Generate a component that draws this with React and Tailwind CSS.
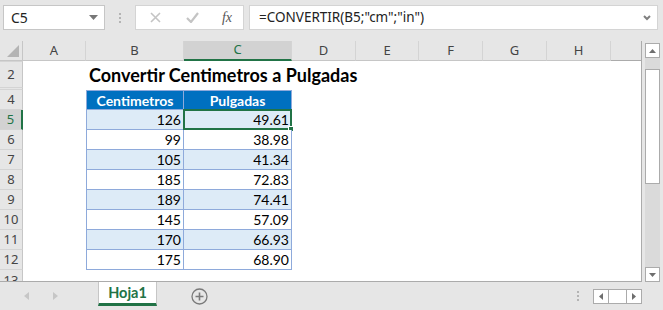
import React from 'react';

const cols = [
  { l: 'A', w: 'w-[63px]' },
  { l: 'B', w: 'w-[98px]' },
  { l: 'C', w: 'w-[108px]', sel: true },
  { l: 'D', w: 'w-[64px]' },
  { l: 'E', w: 'w-[63px]' },
  { l: 'F', w: 'w-[64px]' },
  { l: 'G', w: 'w-[64px]' },
  { l: 'H', w: 'w-[64px]' },
];

const data = [
  [126, '49.61'],
  [99, '38.98'],
  [105, '41.34'],
  [185, '72.83'],
  [189, '74.41'],
  [145, '57.09'],
  [170, '66.93'],
  [175, '68.90'],
];

const ui = { fontFamily: '"Noto Sans", "Open Sans", sans-serif' };
const cal = { fontFamily: 'Lato, "Noto Sans", sans-serif' };

function RowHead({ n, sel, className = '' }) {
  return (
    <div
      className={
        'w-[23px] shrink-0 flex items-center justify-center text-[13px] border-b border-[#d4d4d4] ' +
        (sel
          ? 'bg-[#d2d2d2] text-[#217346] border-r-2 border-r-[#217346]'
          : 'bg-[#e6e6e6] text-[#444444] border-r border-r-[#c6c6c6]') +
        ' ' +
        className
      }
      style={ui}
    >
      {n}
    </div>
  );
}

export default function App() {
  return (
    <div className="w-[663px] h-[310px] bg-[#e6e6e6] flex flex-col overflow-hidden select-none">
      {/* Top formula bar */}
      <div className="h-[41px] shrink-0 flex items-start pt-[5px]">
        <div className="ml-[3px] w-[102px] h-[25px] bg-white border border-[#c6c6c6] flex items-center justify-between pl-[7px] pr-[6px]">
          <span className="text-[14px] text-[#222]" style={ui}>C5</span>
          <svg width="9" height="5" viewBox="0 0 9 5"><path d="M0 0 L9 0 L4.5 5 Z" fill="#777" /></svg>
        </div>
        <div className="w-[30px] h-[25px] flex flex-col items-center justify-center gap-[2px]">
          <div className="w-[2px] h-[2px] bg-[#b4b4b4]" />
          <div className="w-[2px] h-[2px] bg-[#b4b4b4]" />
          <div className="w-[2px] h-[2px] bg-[#b4b4b4]" />
        </div>
        <div className="w-[109px] h-[25px] bg-white border border-[#d4d4d4] flex items-center">
          <div className="w-[36px] flex justify-center ml-[1px]">
            <svg width="11" height="11" viewBox="0 0 11 11"><path d="M1 1 L10 10 M10 1 L1 10" stroke="#c4c4c4" strokeWidth="1.6" /></svg>
          </div>
          <div className="w-[38px] flex justify-center">
            <svg width="13" height="11" viewBox="0 0 13 11"><path d="M1 6 L5 10 L12 1" stroke="#c4c4c4" strokeWidth="2.2" fill="none" /></svg>
          </div>
          <div className="flex-1 flex justify-center">
            <span className="text-[14px] italic text-[#555] leading-none" style={{ fontFamily: '"Liberation Serif", serif' }}>fx</span>
          </div>
        </div>
        <div className="ml-[5px] w-[409px] h-[25px] bg-white border border-[#d4d4d4] flex items-center justify-between pl-[9px] pr-[6px]">
          <span className="text-[13.5px] text-[#222] whitespace-nowrap" style={ui}>=CONVERTIR(B5;"cm";"in")</span>
          <svg width="8" height="6" viewBox="0 0 8 6"><path d="M1 1 L4 4 L7 1" stroke="#808080" strokeWidth="2" fill="none" /></svg>
        </div>
      </div>

      {/* Sheet + vertical scrollbar */}
      <div className="h-[241px] shrink-0 flex">
        <div className="w-[642px] h-[241px] flex flex-col bg-white border-r border-b border-[#ababab]">
          {/* Column headers */}
          <div className="h-[20px] shrink-0 flex bg-[#e6e6e6]">
            <div className="w-[23px] shrink-0 border-r border-b border-[#c6c6c6] flex items-end justify-end pr-[3px] pb-[3px]">
              <svg width="12" height="12" viewBox="0 0 12 12"><path d="M12 0 L12 12 L0 12 Z" fill="#b4b4b4" /></svg>
            </div>
            {cols.map((c) => (
              <div
                key={c.l}
                className={
                  c.w +
                  ' shrink-0 flex items-center justify-center text-[13px] border-r border-r-[#d4d4d4] ' +
                  (c.sel
                    ? 'bg-[#d2d2d2] text-[#217346] border-b-2 border-b-[#217346]'
                    : 'text-[#444444] border-b border-b-[#c6c6c6]')
                }
                style={ui}
              >
                {c.l}
              </div>
            ))}
            <div className="flex-1 border-b border-[#ababab]" />
          </div>

          {/* Row 2 (title) */}
          <div className="h-[27px] shrink-0 flex">
            <RowHead n={2} className="border-t border-t-[#d4d4d4]" />
            <div className="w-[63px] shrink-0" />
            <div className="flex-1 flex items-center pl-[3px] pt-[1px]">
              <span className="text-[18px] font-bold text-black whitespace-nowrap" style={cal}>
                Convertir Centimetros a Pulgadas
              </span>
            </div>
          </div>

          {/* Hidden row 3 marker */}
          <div className="h-[2px] shrink-0 flex">
            <div className="w-[23px] shrink-0 bg-[#e6e6e6] border-r border-[#c6c6c6] border-b border-b-[#d4d4d4]" />
          </div>

          {/* Row 4 table header */}
          <div className="h-[20px] shrink-0 flex">
            <RowHead n={4} />
            <div className="w-[63px] shrink-0" />
            <div className="w-[98px] shrink-0 bg-[#0070c0] border border-[#8eaadb] flex items-center justify-center text-white font-bold text-[14px]" style={cal}>
              Centimetros
            </div>
            <div className="w-[108px] shrink-0 bg-[#0070c0] border-t border-r border-b border-[#8eaadb] flex items-center justify-center text-white font-bold text-[14px]" style={cal}>
              Pulgadas
            </div>
          </div>

          {/* Data rows */}
          {data.map(([a, b], i) => {
            const band = i % 2 === 0;
            const rowNum = i + 5;
            return (
              <div key={rowNum} className="h-[20px] shrink-0 flex">
                <RowHead n={rowNum} sel={rowNum === 5} />
                <div className="w-[63px] shrink-0" />
                <div
                  className={
                    'w-[98px] shrink-0 border-l border-r border-b border-[#8eaadb] flex items-center justify-end pr-[2px] text-[14px] text-black ' +
                    (band ? 'bg-[#ddebf7]' : 'bg-white')
                  }
                  style={cal}
                >
                  {a}
                </div>
                <div
                  className={
                    'relative w-[108px] shrink-0 border-r border-b border-[#8eaadb] flex items-center justify-end pr-[2px] text-[14px] text-black ' +
                    (band ? 'bg-[#ddebf7]' : 'bg-white')
                  }
                  style={cal}
                >
                  {b}
                  {rowNum === 5 && (
                    <>
                      <div className="absolute -left-[1px] -top-[1px] w-[109px] h-[21px] border-2 border-[#217346]" />
                      <div className="absolute -right-[3px] -bottom-[3px] w-[6px] h-[6px] bg-[#217346] border border-white" />
                    </>
                  )}
                </div>
              </div>
            );
          })}

          {/* Row 13 partial */}
          <div className="flex-1 flex overflow-hidden">
            <div className="w-[23px] shrink-0 bg-[#e6e6e6] border-r border-[#c6c6c6] flex justify-center pt-[1px] text-[13px] text-[#444444]" style={ui}>
              13
            </div>
          </div>
        </div>

        {/* Vertical scrollbar */}
        <div className="ml-[3px] mt-[2px] w-[15px] flex flex-col">
          <div className="h-[15px] bg-white border border-[#ababab] flex items-center justify-center">
            <svg width="7" height="4" viewBox="0 0 7 4"><path d="M0 4 L3.5 0 L7 4 Z" fill="#6e6e6e" /></svg>
          </div>
          <div className="flex-1 bg-[#dadada] flex flex-col">
            <div className="mt-[11px] h-[115px] bg-white border border-[#ababab]" />
          </div>
          <div className="h-[15px] bg-white border border-[#ababab] flex items-center justify-center">
            <svg width="7" height="4" viewBox="0 0 7 4"><path d="M0 0 L7 0 L3.5 4 Z" fill="#6e6e6e" /></svg>
          </div>
        </div>
      </div>

      {/* Bottom tab bar */}
      <div className="flex-1 flex items-start">
        <div className="w-[98px] h-[28px] flex items-center">
          <div className="ml-[24px]">
            <svg width="5" height="8" viewBox="0 0 5 8"><path d="M5 0 L0 4 L5 8 Z" fill="#c6c6c6" /></svg>
          </div>
          <div className="ml-[24px]">
            <svg width="5" height="8" viewBox="0 0 5 8"><path d="M0 0 L5 4 L0 8 Z" fill="#c6c6c6" /></svg>
          </div>
        </div>
        <div className="w-[59px] h-[24px] bg-white border-l border-r border-[#c6c6c6] border-b-[3px] border-b-[#217346] flex items-center justify-center">
          <span className="text-[14.5px] font-bold text-[#217346]" style={cal}>Hoja1</span>
        </div>
        <div className="ml-[34px] h-[28px] flex items-center">
          <svg width="17" height="17" viewBox="0 0 17 17">
            <circle cx="8.5" cy="8.5" r="7.5" fill="none" stroke="#7a7a7a" strokeWidth="1.3" />
            <path d="M8.5 4.5 L8.5 12.5 M4.5 8.5 L12.5 8.5" stroke="#7a7a7a" strokeWidth="1.6" />
          </svg>
        </div>
        <div className="ml-[369px] h-[28px] flex flex-col justify-center gap-[2px]">
          <div className="w-[2px] h-[2px] bg-[#b4b4b4]" />
          <div className="w-[2px] h-[2px] bg-[#b4b4b4]" />
          <div className="w-[2px] h-[2px] bg-[#b4b4b4]" />
        </div>
        <div className="ml-[14px] mt-[7px] flex">
          <div className="w-[16px] h-[15px] bg-white border border-[#ababab] flex items-center justify-center">
            <svg width="4" height="7" viewBox="0 0 4 7"><path d="M4 0 L0 3.5 L4 7 Z" fill="#6e6e6e" /></svg>
          </div>
          <div className="w-[17px] h-[15px] bg-white border-t border-b border-[#ababab]" />
          <div className="w-[16px] h-[15px] bg-white border border-[#ababab] flex items-center justify-center">
            <svg width="4" height="7" viewBox="0 0 4 7"><path d="M0 0 L4 3.5 L0 7 Z" fill="#6e6e6e" /></svg>
          </div>
        </div>
      </div>
    </div>
  );
}
